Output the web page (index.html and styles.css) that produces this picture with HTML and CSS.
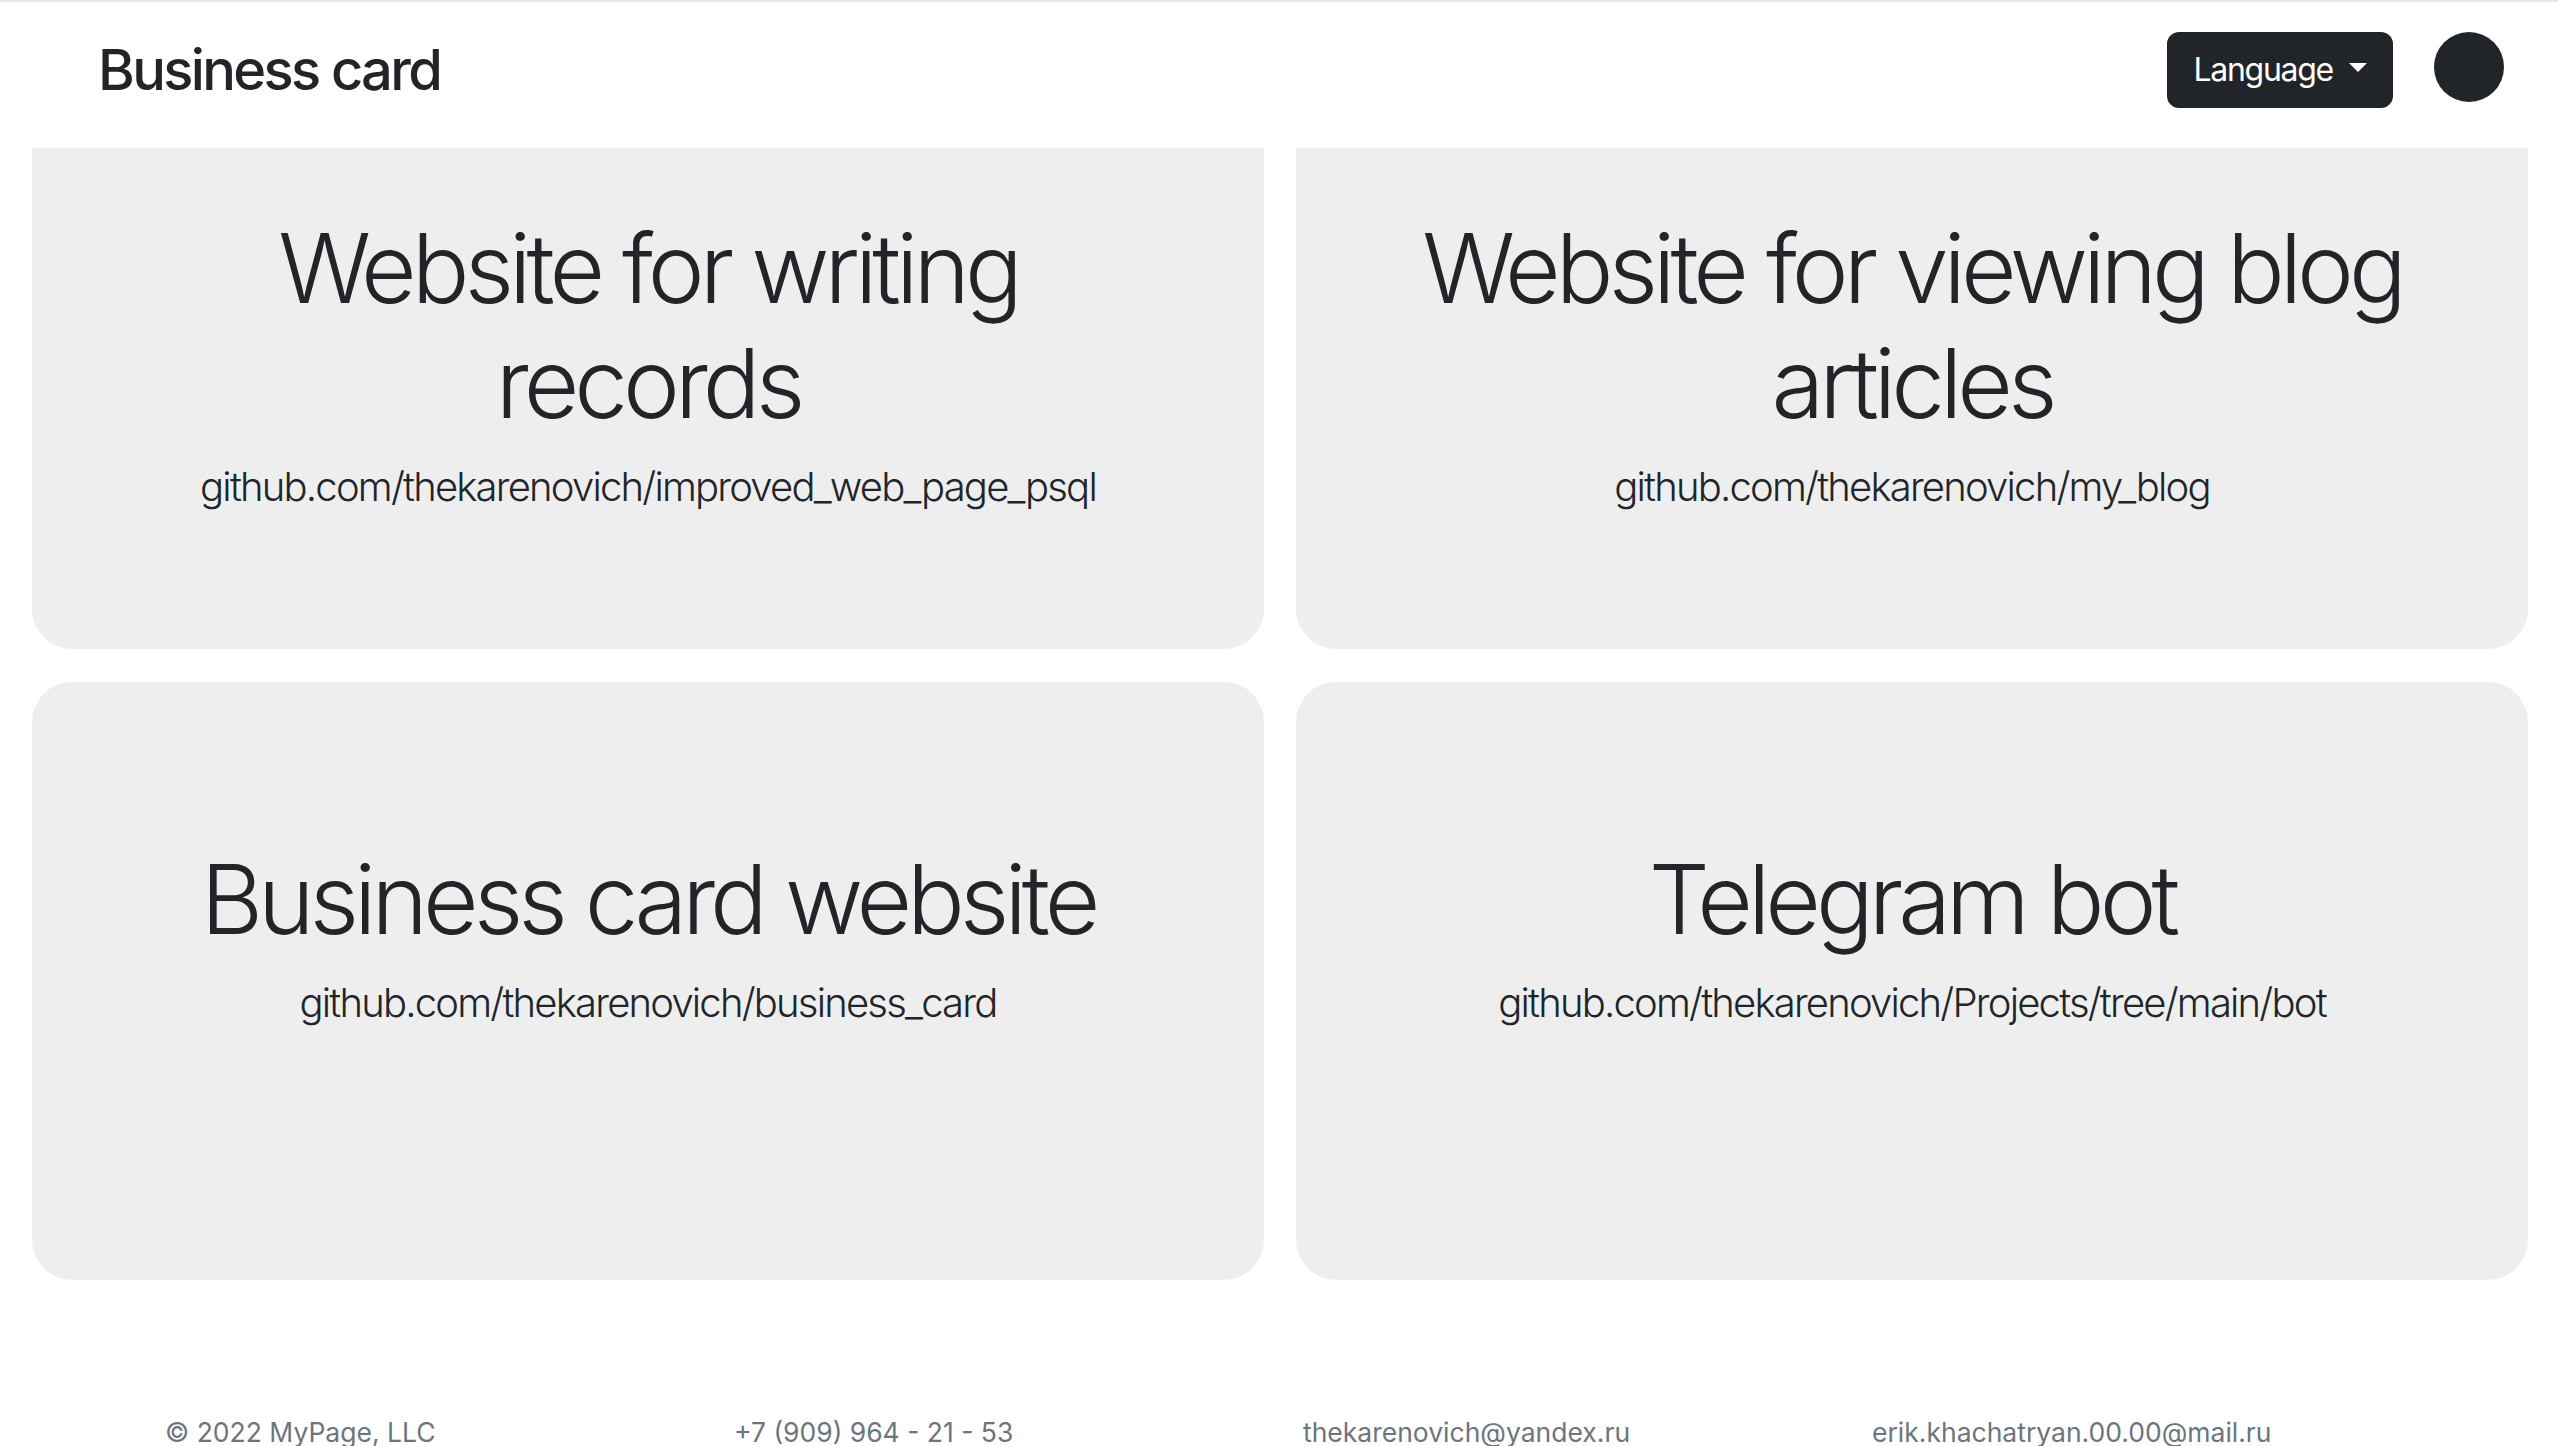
FILE: index.html
```html
<!DOCTYPE html>
<html lang="en">
<head>
<meta charset="utf-8">
<title>Business card</title>
<link rel="stylesheet" href="styles.css">
</head>
<body>
<header class="topbar">
  <div class="brand">Business card</div>
  <div class="actions">
    <button class="lang-btn" type="button">Language<span class="caret"></span></button>
    <span class="avatar"></span>
  </div>
</header>
<main class="projects">
  <article class="project">
    <div class="project-body">
      <h2 class="project-title">Website for writing records</h2>
      <p class="project-link">github.com/thekarenovich/improved_web_page_psql</p>
    </div>
  </article>
  <article class="project">
    <div class="project-body">
      <h2 class="project-title">Website for viewing blog articles</h2>
      <p class="project-link">github.com/thekarenovich/my_blog</p>
    </div>
  </article>
  <article class="project">
    <div class="project-body">
      <h2 class="project-title">Business card website</h2>
      <p class="project-link">github.com/thekarenovich/business_card</p>
    </div>
  </article>
  <article class="project">
    <div class="project-body">
      <h2 class="project-title">Telegram bot</h2>
      <p class="project-link">github.com/thekarenovich/Projects/tree/main/bot</p>
    </div>
  </article>
</main>
<footer class="footer">
  <span class="footer-item">© 2022 MyPage, LLC</span>
  <span class="footer-item">+7 (909) 964 - 21 - 53</span>
  <span class="footer-item">thekarenovich@yandex.ru</span>
  <span class="footer-item">erik.khachatryan.00.00@mail.ru</span>
</footer>
</body>
</html>
```
FILE: styles.css
```css
* { box-sizing: border-box; }

html, body {
  margin: 0;
  background: #ffffff;
  color: #212529;
  font-family: Inter, "Open Sans", "Liberation Sans", sans-serif;
}

body {
  padding-top: 51px;
  overflow: hidden;
}

.topbar {
  position: fixed;
  top: 0;
  left: 0;
  right: 0;
  z-index: 10;
  height: 148px;
  background: #ffffff;
  border-top: 2px solid #e6e6e6;
  padding: 0 54px 11px 98px;
  display: flex;
  align-items: center;
  justify-content: space-between;
}

.brand {
  font-size: 56px;
  line-height: 84px;
  font-weight: 500;
  letter-spacing: -0.047em;
  color: #212529;
}

.actions {
  display: flex;
  align-items: center;
  gap: 41px;
}

.lang-btn {
  display: inline-flex;
  align-items: center;
  background: #212529;
  color: #ffffff;
  border: 2px solid #212529;
  border-radius: 12px;
  padding: 12px 24px;
  font-family: inherit;
  font-size: 32px;
  line-height: 48px;
  font-weight: 400;
  letter-spacing: -0.04em;
}

.caret {
  display: inline-block;
  margin-left: 16px;
  margin-top: -4px;
  width: 0;
  height: 0;
  border-top: 9px solid #ffffff;
  border-left: 9px solid transparent;
  border-right: 9px solid transparent;
}

.avatar {
  display: block;
  width: 70px;
  height: 70px;
  border-radius: 50%;
  background: #212529;
  margin-bottom: 5px;
}

.projects {
  display: grid;
  grid-template-columns: 1fr 1fr;
  column-gap: 32px;
  row-gap: 33px;
  padding: 0 30px 0 32px;
}

.project {
  height: 598px;
  background: #eeeeee;
  border-radius: 40px;
  padding: 96px 96px 0;
  text-align: center;
  overflow: hidden;
}

.project-body {
  margin: 32px 0;
  padding: 32px 0;
}

.project-title {
  margin: 0 0 16px;
  font-size: 96px;
  line-height: 1.2;
  font-weight: 300;
  letter-spacing: -0.052em;
  color: #212529;
}

.project-link {
  margin: 0 0 32px;
  font-size: 40px;
  line-height: 1.5;
  font-weight: 300;
  letter-spacing: -0.045em;
  color: #212529;
}

.footer {
  display: grid;
  grid-template-columns: repeat(4, 569px);
  padding: 0 0 0 165px;
  margin-top: 131px;
}

.footer-item {
  font-size: 26.5px;
  line-height: 42px;
  color: #6c757d;
  white-space: nowrap;
}
```
